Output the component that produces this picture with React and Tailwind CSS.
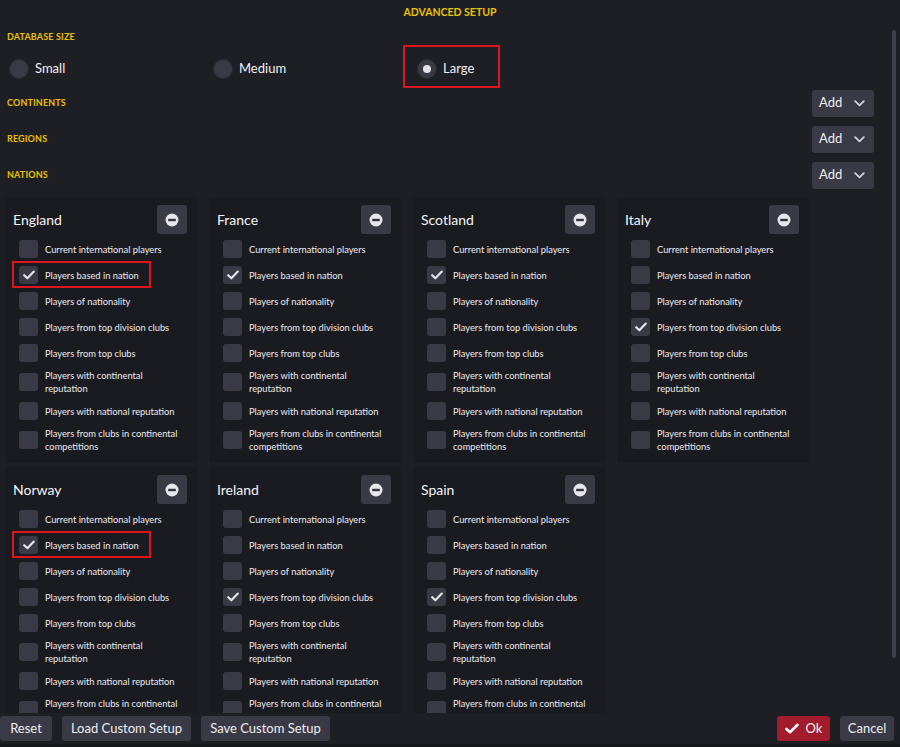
import React from "react";

const LABELS = [
  ["Current international players"],
  ["Players based in nation"],
  ["Players of nationality"],
  ["Players from top division clubs"],
  ["Players from top clubs"],
  ["Players with continental", "reputation"],
  ["Players with national reputation"],
  ["Players from clubs in continental", "competitions"],
];

const NATIONS = [
  { name: "England", checked: 1, hl: true },
  { name: "France", checked: 1 },
  { name: "Scotland", checked: 1 },
  { name: "Italy", checked: 3 },
  { name: "Norway", checked: 1, hl: true },
  { name: "Ireland", checked: 3 },
  { name: "Spain", checked: 3 },
];

const FONT = { fontFamily: "Lato, 'Noto Sans', sans-serif" };

function Check({ className }) {
  return (
    <svg width="12" height="10" viewBox="0 0 12 10" className={className}>
      <polyline points="1.2,5.2 4.4,8.3 10.8,1.6" fill="none" stroke="#e6e6ea" strokeWidth="2.1" strokeLinecap="round" strokeLinejoin="round" />
    </svg>
  );
}

function MinusIcon() {
  return (
    <svg width="14" height="14" viewBox="0 0 14 14">
      <circle cx="7" cy="7" r="6.5" fill="#e8e8ec" />
      <rect x="3.2" y="5.8" width="7.6" height="2.4" fill="#32333c" />
    </svg>
  );
}

function Chevron() {
  return (
    <svg width="11" height="7" viewBox="0 0 11 7">
      <polyline points="1.2,1.2 5.5,5.4 9.8,1.2" fill="none" stroke="#d4d4d8" strokeWidth="1.8" strokeLinecap="round" strokeLinejoin="round" />
    </svg>
  );
}

function AddButton() {
  return (
    <div className="flex h-[27px] w-[62px] items-center gap-[12px] rounded-[3px] bg-[#393a45] pl-[7px] text-[13px] text-[#eeeef2]">
      <span>Add</span>
      <Chevron />
    </div>
  );
}

function SectionLabel({ children }) {
  return <div className="pl-[2px] text-[9px] font-bold tracking-[0.15px] text-[#e8c000]">{children}</div>;
}

function Radio({ label, selected }) {
  return (
    <div className="relative flex w-[204px] items-center gap-[7px] pl-[3px]">
      <div className="flex h-[18px] w-[18px] items-center justify-center rounded-full bg-[#393a45] shadow-[0_0_0_1px_#2c2d35]">
        {selected && <div className="h-[8px] w-[8px] rounded-full bg-[#e2e2e6]" />}
      </div>
      <span className="text-[13px] text-[#f0f0f4]">{label}</span>
      {selected && <div className="absolute left-[-12px] top-[-14px] h-[43px] w-[97px] border-2 border-[#e0141c]" />}
    </div>
  );
}

function Row({ lines, checked, hl }) {
  return (
    <div className="relative flex min-h-[20px] items-center">
      <div className="ml-[6px] flex h-[18px] w-[19px] shrink-0 items-center justify-center rounded-[3px] bg-[#393a45]">
        {checked && <Check />}
      </div>
      <div className="ml-[7px] whitespace-nowrap text-[9.3px] leading-[13px] text-[#ececf0]">
        {lines.map((l, i) => (
          <div key={i}>{l}</div>
        ))}
      </div>
      {hl && <div className="absolute left-[-1px] top-[-4px] h-[27px] w-[139px] border-2 border-[#e0141c]" />}
    </div>
  );
}

function Card({ nation }) {
  return (
    <div className="bg-[#1a1b20] pb-[10px] pl-[8px] pr-[10px] pt-[8px]">
      <div className="flex h-[29px] items-center justify-between">
        <span className="text-[14px] text-[#f4f4f8]">{nation.name}</span>
        <div className="flex h-[29px] w-[30px] items-center justify-center rounded-[3px] bg-[#393a45]">
          <MinusIcon />
        </div>
      </div>
      <div className="mt-[5px] flex flex-col gap-[6px]">
        {LABELS.map((lines, i) => (
          <Row key={i} lines={lines} checked={i === nation.checked} hl={nation.hl && i === 1} />
        ))}
      </div>
    </div>
  );
}

function BarButton({ children, className = "" }) {
  return (
    <div className={"flex h-[25px] items-center justify-center rounded-[3px] bg-[#393a45] text-[13px] text-[#eeeef2] " + className}>
      {children}
    </div>
  );
}

export default function App() {
  return (
    <div className="flex h-[747px] w-[900px] flex-col overflow-hidden bg-[#1e1f25]" style={FONT}>
      <div className="flex h-[26px] shrink-0 items-center justify-center text-[10.5px] font-bold text-[#e8c000]">
        ADVANCED SETUP
      </div>
      <div className="relative min-h-0 flex-1 overflow-hidden">
        <div className="absolute right-[4px] top-[4px] h-[628px] w-[4px] rounded-full bg-[#3e3f48]" />
        <div className="pl-[5px] pr-[26px]">
          <div className="flex h-[21px] items-center pt-[1px]">
            <SectionLabel>DATABASE SIZE</SectionLabel>
          </div>
          <div className="flex h-[38px] items-center pl-[2px] pt-[6px]">
            <Radio label="Small" />
            <Radio label="Medium" />
            <Radio label="Large" selected />
          </div>
          {["CONTINENTS", "REGIONS", "NATIONS"].map((t) => (
            <div key={t} className="flex h-[36px] items-center justify-between">
              <SectionLabel>{t}</SectionLabel>
              <AddButton />
            </div>
          ))}
          <div className="mt-[4px] grid grid-cols-[repeat(4,192px)] gap-x-[12px] gap-y-[4px]">
            {NATIONS.map((n) => (
              <Card key={n.name} nation={n} />
            ))}
          </div>
        </div>
      </div>
      <div className="flex h-[34px] shrink-0 items-start border-b-[3px] border-[#16171b] pt-[3px]">
        <div className="flex gap-[10px]">
          <BarButton className="w-[52px]">Reset</BarButton>
          <BarButton className="w-[129px]">Load Custom Setup</BarButton>
          <BarButton className="w-[129px]">Save Custom Setup</BarButton>
        </div>
        <div className="ml-auto mr-[6px] flex gap-[10px]">
          <BarButton className="w-[53px] gap-[7px] bg-[#a31c2c]">
            <svg width="14" height="11" viewBox="0 0 14 11">
              <polyline points="1.5,6 5,9.2 12.5,1.8" fill="none" stroke="#ffffff" strokeWidth="2.6" strokeLinecap="round" strokeLinejoin="round" />
            </svg>
            <span>Ok</span>
          </BarButton>
          <BarButton className="w-[54px]">Cancel</BarButton>
        </div>
      </div>
    </div>
  );
}
